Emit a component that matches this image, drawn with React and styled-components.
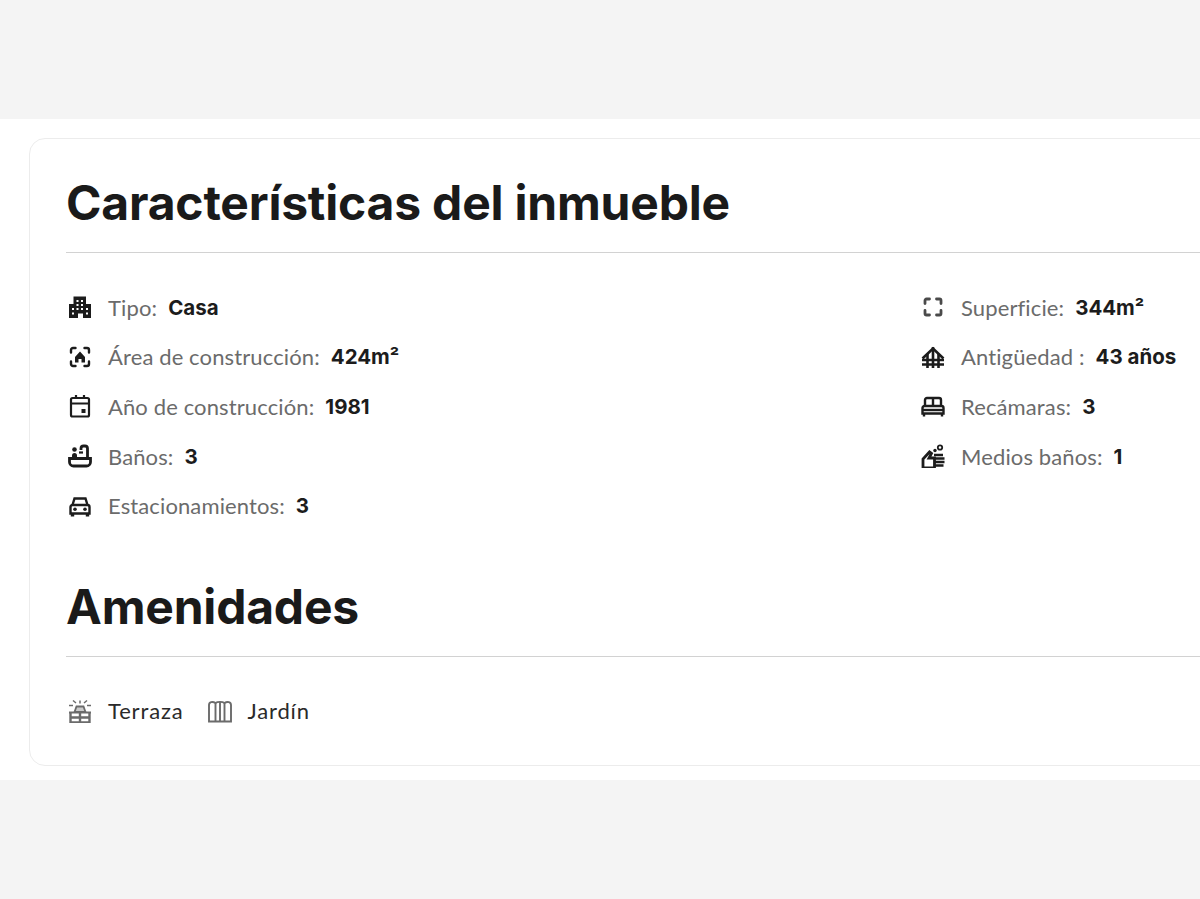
import React from 'react';
import styled, { createGlobalStyle } from 'styled-components';

const GlobalStyle = createGlobalStyle`
  html, body {
    margin: 0;
    padding: 0;
    background: #f4f4f4;
  }
  body {
    font-family: "Lato", "Liberation Sans", sans-serif;
    overflow: hidden;
  }
`;

const Page = styled.div`
  width: 1200px;
  height: 899px;
  padding-top: 119px;
  box-sizing: border-box;
  overflow: hidden;
`;

const Band = styled.section`
  background: #fff;
  height: 661px;
  padding: 19px 0 0 29px;
  box-sizing: border-box;
  overflow: hidden;
`;

const Card = styled.div`
  width: 1300px;
  height: 628px;
  box-sizing: border-box;
  border: 1px solid #ececec;
  border-radius: 16px;
  padding: 36px 0 0 36px;
`;

const Heading = styled.h2`
  margin: 0;
  font-family: "Inter", "Liberation Sans", sans-serif;
  font-size: 48px;
  line-height: 56px;
  font-weight: 700;
  letter-spacing: -0.2px;
  color: #1a1a1a;
  padding-bottom: 21px;
  border-bottom: 1px solid #d2d2d2;
`;

const Features = styled.div`
  display: grid;
  grid-template-columns: 853px 1fr;
  margin-top: 42px;
  min-height: 284px;
`;

const Column = styled.div`
  display: flex;
  flex-direction: column;
  gap: 25.7px;
`;

const Row = styled.div`
  display: flex;
  align-items: center;
  height: 24px;
  font-size: 22px;
  white-space: nowrap;
`;

const IconBox = styled.span`
  display: inline-flex;
  flex-shrink: 0;
  width: 24px;
  height: 24px;
  margin: 0 16px 0 2px;
  color: ${(p) => p.$color || '#1c1c1c'};

  svg {
    width: 24px;
    height: 24px;
    display: block;
  }
`;

const Label = styled.span`
  color: #6b6b6b;
  font-weight: 400;
  letter-spacing: 0.12px;
  margin-right: 11px;
`;

const Value = styled.span`
  font-family: "Inter", "Liberation Sans", sans-serif;
  font-size: 20.5px;
  line-height: 26px;
  padding-top: 1px;
  color: #1c1c1c;
  font-weight: 700;
`;

const Amenities = styled.div`
  display: flex;
  align-items: center;
  margin-top: 42px;
`;

const Amenity = styled.div`
  height: 24px;
  line-height: 24px;
  margin-right: 22px;
  font-size: 22px;
  letter-spacing: 0.85px;
  color: #2a2a2a;
`;

const Building = () => (
  <svg viewBox="0 0 24 24" fill="currentColor">
    <path fillRule="evenodd" d="M5.500 1.500h12.500V9H23v14h-8v-4.500H10V23H1V9h4.500V1.500zM8.500 5v2h2V5h-2zm4.500 0v2h2V5h-2zM8.500 9v2h2V9h-2zm4.500 0v2h2V9h-2zm-9 4v2h2v-2H4zm4.500 0v2h2v-2h-2zm4.500 0v2h2v-2h-2zm5 0v2h2v-2h-2zM4 17.500v2h2v-2H4zm14 0v2h2v-2h-2z" />
  </svg>
);

const HomeScan = () => (
  <svg viewBox="0 0 24 24" fill="none" stroke="currentColor" strokeWidth="2.400" strokeLinecap="round">
    <path d="M3 7.500V5a2 2 0 0 1 2-2h2.500M16.500 3H19a2 2 0 0 1 2 2v2.500M21 16.500V19a2 2 0 0 1-2 2h-2.500M7.500 21H5a2 2 0 0 1-2-2v-2.500" />
    <path fillRule="evenodd" d="M7 12 12 6.500 17 12v5.500h-3.500V14h-3v3.500H7z" fill="currentColor" stroke="none" />
  </svg>
);

const CalendarDay = () => (
  <svg viewBox="0 0 24 24" fill="none" stroke="currentColor" strokeWidth="2.200">
    <rect x="3" y="4" width="18" height="18.500" rx="1.500" />
    <path d="M3 9.500h18M8 1V5M16 1V5" />
    <rect x="13.500" y="15" width="4" height="4" fill="currentColor" stroke="none" />
  </svg>
);

const Bathtub = () => (
  <svg viewBox="0 0 24 24" fill="none" stroke="currentColor" strokeWidth="2.800">
    <path d="M1.500 14.500h21V18a4 4 0 0 1-4 4H5.500a4 4 0 0 1-4-4z" />
    <path d="M19.500 14.500V4.500A2.500 2.500 0 0 0 17 2h-1.500A2.500 2.500 0 0 0 13 4.500V6" />
    <circle cx="6.500" cy="5.500" r="2.300" fill="currentColor" stroke="none" />
    <path d="M4 14v-2.500a2.500 2.500 0 0 1 5 0V14z" fill="currentColor" stroke="none" />
    <path d="M11 8.500h4" strokeWidth="2.200" />
  </svg>
);

const Car = () => (
  <svg viewBox="0 0 24 24" fill="none" stroke="currentColor" strokeWidth="2.400">
    <path d="M4.500 11 6.500 4.500h11L19.500 11" />
    <path d="M2.500 13a2 2 0 0 1 2-2h15a2 2 0 0 1 2 2v6.500h-19z" />
    <path d="M4.500 19v3.500M19.500 19v3.500" strokeWidth="3.400" />
    <circle cx="7" cy="15.200" r="1.800" fill="currentColor" stroke="none" />
    <circle cx="17" cy="15.200" r="1.800" fill="currentColor" stroke="none" />
  </svg>
);

const Corners = () => (
  <svg viewBox="0 0 24 24" fill="none" stroke="#4a4a4a" strokeWidth="2.800" strokeLinecap="round">
    <path d="M4 8.500V5.500A1.500 1.500 0 0 1 5.500 4h3M15.500 4h3A1.500 1.500 0 0 1 20 5.500v3M20 15.500v3a1.500 1.500 0 0 1-1.500 1.500h-3M8.500 20h-3A1.500 1.500 0 0 1 4 18.500v-3" />
  </svg>
);

const OldHouse = () => (
  <svg viewBox="0 0 24 24" fill="none" stroke="currentColor" strokeWidth="2.600">
    <path d="M1.500 13.500 12 3.500l10.500 10" />
    <path d="M6.500 9V23M12 2v21M17.500 9V23" />
    <path d="M1 15h22M1 19.500h22" />
  </svg>
);

const Bed = () => (
  <svg viewBox="0 0 24 24" fill="none" stroke="currentColor" strokeWidth="2.400">
    <path d="M4 12V6a2 2 0 0 1 2-2h12a2 2 0 0 1 2 2v6" />
    <path d="M1.500 14a2 2 0 0 1 2-2h17a2 2 0 0 1 2 2v5.500h-21z" />
    <path d="M12 4v8M3 20v2.500M21 20v2.500" />
    <path d="M1.500 16h21" />
  </svg>
);

const HandWash = () => (
  <svg viewBox="0 0 24 24" fill="none" stroke="currentColor" strokeWidth="2.800">
    <path d="M2 24v-9l6.500-7 2 1.500L8 14h5.500v10z" />
    <path d="M13 11h9M13 14.500h10.500M13 18h10.500M13 21.500h9.500" strokeWidth="2.400" />
    <circle cx="19" cy="3.500" r="2.200" strokeWidth="1.800" />
    <circle cx="14" cy="6.500" r="1.700" fill="currentColor" stroke="none" />
  </svg>
);

const SunDeck = () => (
  <svg viewBox="0 0 24 24" fill="none" stroke="currentColor" strokeWidth="1.800">
    <path d="M5 1.500 8 4M19 1.500 16 4M12 1.500v3M1 6.500h4M19 6.500h4" strokeWidth="1.500" />
    <path d="M8.500 7.500h7L17.500 13h-11z" fill="currentColor" fillOpacity="0.35" />
    <path d="M1 13.500h22" strokeWidth="2" />
    <path d="M2.500 14v9.500h19V14M12 13.500v10M2.500 18.500h19" strokeWidth="2.400" />
  </svg>
);

const Arches = () => (
  <svg viewBox="0 0 24 24" fill="none" stroke="currentColor" strokeWidth="1.900">
    <path d="M1 22.500V6C1 3 4.500 2 7.500 4 9.500 2.500 14.500 2.500 16.500 4 19.500 2 23 3 23 6v16.500z" />
    <path d="M7.500 4V22.500M12 3V22.500M16.500 4V22.500" />
  </svg>
);

const leftRows = [
  { icon: <Building />, label: 'Tipo:', value: 'Casa' },
  { icon: <HomeScan />, label: 'Área de construcción:', value: '424m²' },
  { icon: <CalendarDay />, label: 'Año de construcción:', value: '1981' },
  { icon: <Bathtub />, label: 'Baños:', value: '3' },
  { icon: <Car />, label: 'Estacionamientos:', value: '3' },
];

const rightRows = [
  { icon: <Corners />, label: 'Superficie:', value: '344m²' },
  { icon: <OldHouse />, label: 'Antigüedad :', value: '43 años' },
  { icon: <Bed />, label: 'Recámaras:', value: '3' },
  { icon: <HandWash />, label: 'Medios baños:', value: '1' },
];

const FeatureColumn = ({ rows }) => (
  <Column>
    {rows.map((row) => (
      <Row key={row.label}>
        <IconBox>{row.icon}</IconBox>
        <Label>{row.label}</Label>
        <Value>{row.value}</Value>
      </Row>
    ))}
  </Column>
);

const App = () => (
  <Page>
    <GlobalStyle />
    <Band>
      <Card>
        <Heading>Características del inmueble</Heading>
        <Features>
          <FeatureColumn rows={leftRows} />
          <FeatureColumn rows={rightRows} />
        </Features>
        <Heading>Amenidades</Heading>
        <Amenities>
          <IconBox $color="#6b6b6b"><SunDeck /></IconBox>
          <Amenity>Terraza</Amenity>
          <IconBox $color="#6b6b6b"><Arches /></IconBox>
          <Amenity>Jardín</Amenity>
        </Amenities>
      </Card>
    </Band>
  </Page>
);

export default App;
